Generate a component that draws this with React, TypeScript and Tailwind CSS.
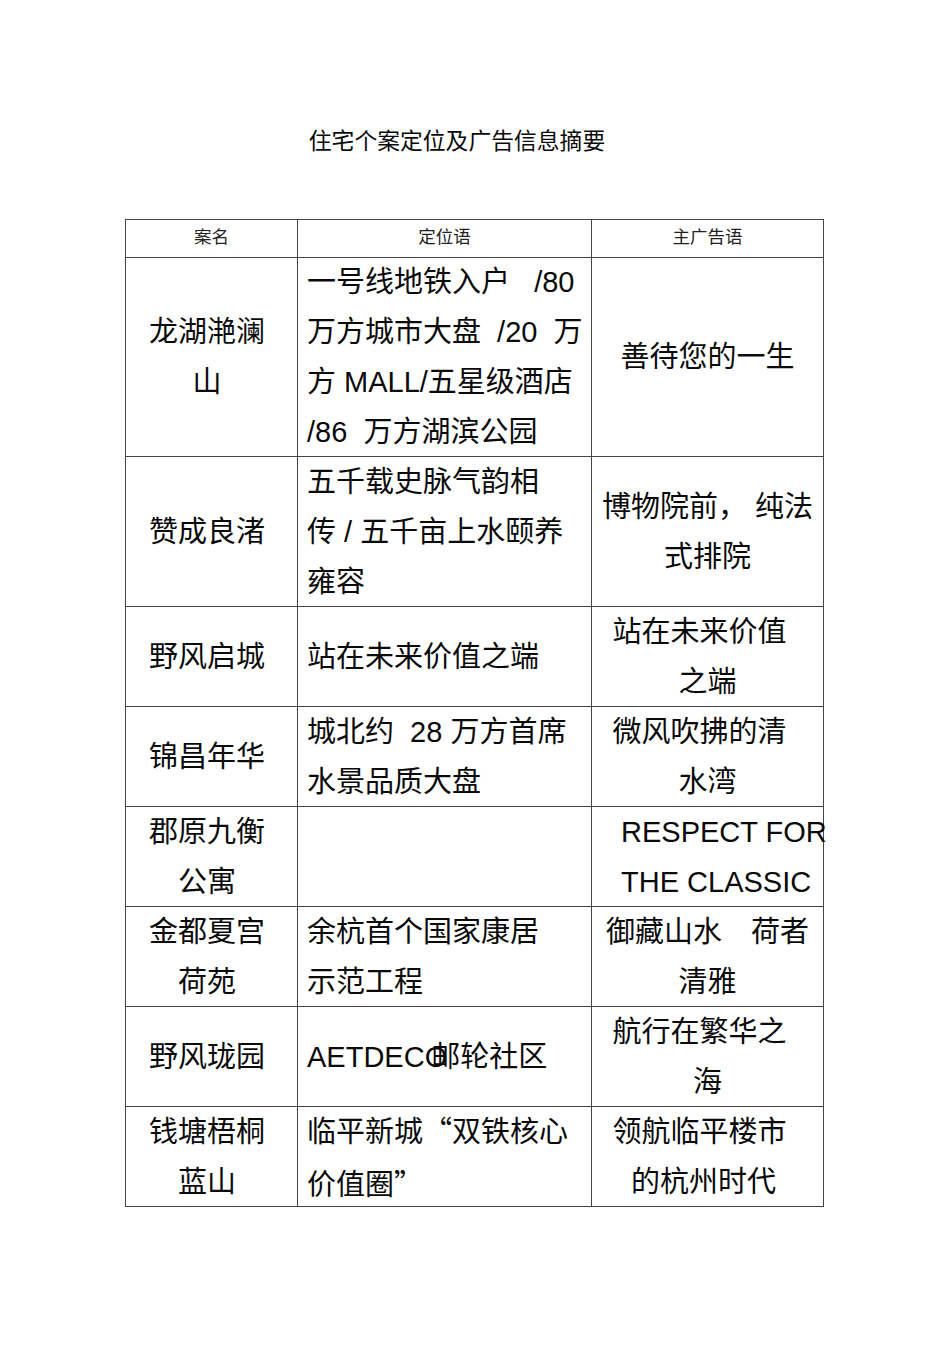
const cjk = "font-['Noto_Sans_CJK_SC',sans-serif]";

type Row = {
  h: string;
  name: string[];
  pos: React.ReactNode[];
  ad: React.ReactNode[];
  adLeft?: boolean;
};

const rows: Row[] = [
  {
    h: "h-[199px]",
    name: ["龙湖滟澜", "山"],
    pos: ["一号线地铁入户   /80", "万方城市大盘  /20  万", "方 MALL/五星级酒店", "/86  万方湖滨公园"],
    ad: ["善待您的一生"],
  },
  {
    h: "h-[150px]",
    name: ["赞成良渚"],
    pos: ["五千载史脉气韵相", "传 / 五千亩上水颐养", "雍容"],
    ad: ["博物院前， 纯法", "式排院"],
  },
  {
    h: "h-[100px]",
    name: ["野风启城"],
    pos: ["站在未来价值之端"],
    ad: [<span className="pr-4">站在未来价值</span>, "之端"],
  },
  {
    h: "h-[100px]",
    name: ["锦昌年华"],
    pos: ["城北约  28 万方首席", "水景品质大盘"],
    ad: [<span className="pr-4">微风吹拂的清</span>, "水湾"],
  },
  {
    h: "h-[100px]",
    name: ["郡原九衡", "公寓"],
    pos: [],
    ad: ["RESPECT FOR", "THE CLASSIC"],
    adLeft: true,
  },
  {
    h: "h-[100px]",
    name: ["金都夏宫", "荷苑"],
    pos: ["余杭首个国家康居", "示范工程"],
    ad: ["御藏山水　荷者", "清雅"],
  },
  {
    h: "h-[100px]",
    name: ["野风珑园"],
    pos: [
      <>
        AETDECO<span className="ml-[-16px]">邮轮社区</span>
      </>,
    ],
    ad: [<span className="pr-4">航行在繁华之</span>, "海"],
  },
  {
    h: "h-[100px]",
    name: ["钱塘梧桐", "蓝山"],
    pos: [
      <>
        临平新城<span className={cjk}>“</span>双铁核心
      </>,
      <>
        价值圈<span className={cjk}>”</span>
      </>,
    ],
    ad: [<span className="pr-4">领航临平楼市</span>, <span className="pr-2">的杭州时代</span>],
  },
];

export default function App() {
  return (
    <div className="w-[950px] min-h-[1345px] bg-white text-[#0a0a0a] font-['Liberation_Sans','Noto_Sans_CJK_SC',sans-serif]">
      <div className="pt-[126px] h-[156px] pr-[36px] text-center text-[22.8px] leading-[30px]">
        住宅个案定位及广告信息摘要
      </div>

      <div className="mt-[63px] ml-[125px] w-[699px] grid grid-cols-[172px_294px_232px] border-l border-t border-[#444]">
        <div className="h-[38px] border-r border-b border-[#444] flex items-center justify-center pb-[2px] text-[17.5px] text-[#222]">案名</div>
        <div className="h-[38px] border-r border-b border-[#444] flex items-center justify-center pb-[2px] text-[17.5px] text-[#222]">定位语</div>
        <div className="h-[38px] border-r border-b border-[#444] flex items-center justify-center pb-[2px] text-[17.5px] text-[#222]">主广告语</div>

        {rows.map((r, i) => (
          <div key={i} className="contents">
            <div className={`${r.h} border-r border-b border-[#444] flex flex-col items-center justify-center pr-[9px] text-[29px] leading-[50px]`}>
              {r.name.map((l, j) => (
                <div key={j} className="whitespace-pre">{l}</div>
              ))}
            </div>
            <div className={`${r.h} border-r border-b border-[#444] flex flex-col justify-center pl-[9px] text-[29px] leading-[50px]`}>
              {r.pos.map((l, j) => (
                <div key={j} className="whitespace-pre">{l}</div>
              ))}
            </div>
            <div
              className={`${r.h} border-r border-b border-[#444] flex flex-col justify-center text-[29px] leading-[50px] ${
                r.adLeft ? "items-start pl-[29px] text-[29.5px]" : "items-center"
              }`}
            >
              {r.ad.map((l, j) => (
                <div key={j} className="whitespace-pre">{l}</div>
              ))}
            </div>
          </div>
        ))}
      </div>
    </div>
  );
}
